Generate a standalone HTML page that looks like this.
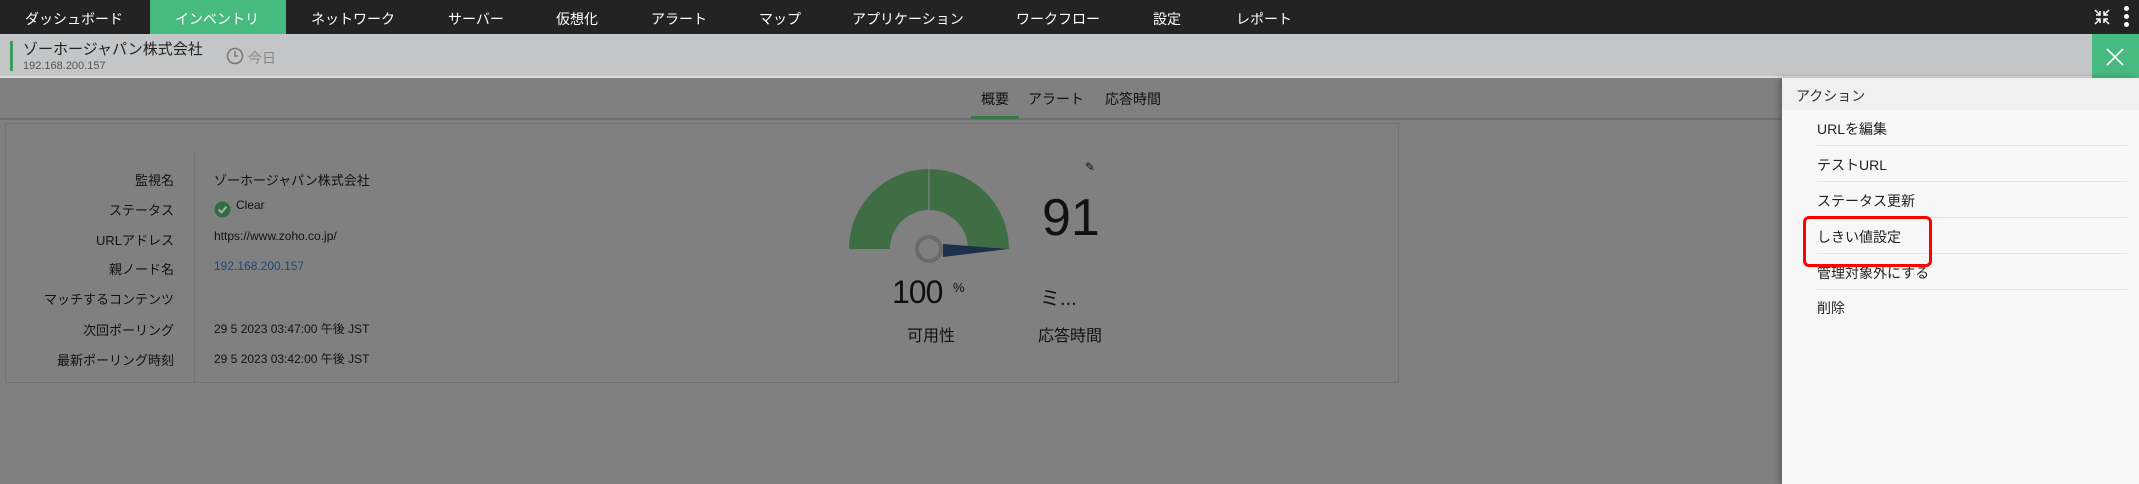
<!DOCTYPE html>
<html><head><meta charset="utf-8"><style>
*{margin:0;padding:0;box-sizing:border-box}
body{width:2139px;height:484px;overflow:hidden;background:#808080;font-family:"Liberation Sans","Noto Sans CJK JP",sans-serif;position:relative;color:#111}
.a{position:absolute;white-space:nowrap}
#nav{left:0;top:0;width:2139px;height:34px;background:#232323}
#act{left:150px;top:0;width:136px;height:34px;background:#47bb7f}
#hdr{left:0;top:34px;width:2139px;height:44px;background:#c4c5c6;border-bottom:2px solid #ddd}
.lbl{font-size:13px;color:#111;text-align:right;width:170px;left:4px}
.val{font-size:13px;color:#111;left:214px}
#panel{left:1782px;top:78px;width:357px;height:406px;background:#f7f7f7;box-shadow:-3px 0 6px rgba(0,0,0,.25)}
.it{left:35px;font-size:14px;color:#222}
.ln{left:35px;width:310px;height:1px;background:#e3e3e3}
.n{position:absolute;top:9px;color:#fff;font-size:14px}
</style></head><body>
<div class="a" id="nav"></div>
<div class="a" id="act"></div>
<div class="a" style="left:0;top:0;width:1300px;height:34px">
<span class="n" style="left:25px">ダッシュボード</span>
<span class="n" style="left:175px">インベントリ</span>
<span class="n" style="left:311px">ネットワーク</span>
<span class="n" style="left:448px">サーバー</span>
<span class="n" style="left:556px">仮想化</span>
<span class="n" style="left:651px">アラート</span>
<span class="n" style="left:759px">マップ</span>
<span class="n" style="left:852px">アプリケーション</span>
<span class="n" style="left:1016px">ワークフロー</span>
<span class="n" style="left:1153px">設定</span>
<span class="n" style="left:1236px">レポート</span>
</div>
<svg class="a" style="left:2092px;top:7px" width="20" height="20" viewBox="0 0 20 20" stroke="#fff" stroke-width="1.5" fill="none"><path d="M3 3l5 5M8 4v4H4M17 3l-5 5M12 4v4h4M3 17l5-5M4 12h4v4M17 17l-5-5M16 12h-4v4"/></svg>
<div class="a" style="left:2124px;top:6px;width:5px;height:5px;border-radius:50%;background:#fff"></div>
<div class="a" style="left:2124px;top:14px;width:5px;height:5px;border-radius:50%;background:#fff"></div>
<div class="a" style="left:2124px;top:22px;width:5px;height:5px;border-radius:50%;background:#fff"></div>
<div class="a" id="hdr"></div>
<div class="a" style="left:10px;top:41px;width:3px;height:30px;background:#3f9a5f"></div>
<div class="a" style="left:23px;top:38px;font-size:15px;color:#222">ゾーホージャパン株式会社</div>
<div class="a" style="left:23px;top:60px;font-size:11px;color:#555">192.168.200.157</div>
<svg class="a" style="left:226px;top:47px" width="18" height="18" viewBox="0 0 18 18" fill="none" stroke="#777" stroke-width="1.5"><circle cx="9" cy="9" r="7.5"/><path d="M9 4v5h3"/></svg>
<div class="a" style="left:248px;top:48px;font-size:14px;color:#888">今日</div>
<div class="a" style="left:2092px;top:34px;width:47px;height:44px;background:#47bb7f"></div>
<svg class="a" style="left:2105px;top:47px" width="20" height="20" viewBox="0 0 20 20" stroke="#fff" stroke-width="1.6"><path d="M2 2l16 16M18 2L2 18"/></svg>
<div class="a" style="left:0;top:118px;width:1782px;height:2px;background:#6f6f6f"></div>
<div class="a" style="left:981px;top:89px;font-size:14px">概要</div>
<div class="a" style="left:1028px;top:89px;font-size:14px">アラート</div>
<div class="a" style="left:1105px;top:89px;font-size:14px">応答時間</div>
<div class="a" style="left:971px;top:116px;width:48px;height:3px;background:#3a7448"></div>
<div class="a" style="left:5px;top:123px;width:1394px;height:260px;border:1px solid #727272"></div>
<div class="a" style="left:194px;top:154px;width:1px;height:228px;background:#747474"></div>
<div class="a lbl" style="top:170px">監視名</div>
<div class="a lbl" style="top:200px">ステータス</div>
<div class="a lbl" style="top:230px">URLアドレス</div>
<div class="a lbl" style="top:259px">親ノード名</div>
<div class="a lbl" style="top:289px">マッチするコンテンツ</div>
<div class="a lbl" style="top:320px">次回ポーリング</div>
<div class="a lbl" style="top:350px">最新ポーリング時刻</div>
<div class="a val" style="top:170px">ゾーホージャパン株式会社</div>
<svg class="a" style="left:214px;top:201px" width="17" height="17" viewBox="0 0 17 17"><circle cx="8.5" cy="8.5" r="8" fill="#2e6e40"/><path d="M4.5 8.5l3 3 5-6" stroke="#aaa" stroke-width="2" fill="none"/></svg>
<div class="a val" style="left:236px;top:198px;font-size:12px">Clear</div>
<div class="a val" style="top:229px;font-size:12px">https://www.zoho.co.jp/</div>
<div class="a val" style="top:259px;font-size:12px;color:#1d4a74">192.168.200.157</div>
<div class="a val" style="top:320px;font-size:12px">29 5 2023 03:47:00 午後 JST</div>
<div class="a val" style="top:350px;font-size:12px">29 5 2023 03:42:00 午後 JST</div>
<svg class="a" style="left:840px;top:160px" width="180" height="110" viewBox="840 160 180 110">
<path d="M849 249A80 80 0 0 1 1009 249H968A39 39 0 0 0 890 249Z" fill="#3f6e45"/>
<line x1="929" y1="160" x2="929" y2="212" stroke="#8a8a8a" stroke-width="1"/>
<circle cx="929" cy="249" r="12" fill="none" stroke="#6a6a6a" stroke-width="4"/>
<path d="M943 244L1008 249L943 257Z" fill="#1e2f4a"/>
</svg>
<div class="a" style="left:892px;top:274px;font-size:32px;letter-spacing:-1px">100</div>
<div class="a" style="left:953px;top:280px;font-size:13px">%</div>
<div class="a" style="left:907px;top:322px;font-size:16px">可用性</div>
<div class="a" style="left:1042px;top:188px;font-size:52px">91</div>
<div class="a" style="left:1040px;top:282px;font-size:20px">ミ...</div>
<div class="a" style="left:1038px;top:322px;font-size:16px">応答時間</div>
<div class="a" style="left:1085px;top:160px;font-size:12px">✎</div>
<div class="a" id="panel">
<div class="a" style="left:0;top:0;width:357px;height:32px;background:#f0f0f0"></div>
<div class="a" style="left:14px;top:8px;font-size:14px;color:#333">アクション</div>
<div class="a it" style="top:41px">URLを編集</div>
<div class="a ln" style="top:67px"></div>
<div class="a it" style="top:77px">テストURL</div>
<div class="a ln" style="top:103px"></div>
<div class="a it" style="top:113px">ステータス更新</div>
<div class="a ln" style="top:139px"></div>
<div class="a it" style="top:149px">しきい値設定</div>
<div class="a ln" style="top:175px"></div>
<div class="a it" style="top:185px">管理対象外にする</div>
<div class="a ln" style="top:211px"></div>
<div class="a it" style="top:220px">削除</div>
<div class="a" style="left:21px;top:138px;width:129px;height:51px;border:3px solid #f00;border-radius:6px"></div>
</div>
</body></html>
